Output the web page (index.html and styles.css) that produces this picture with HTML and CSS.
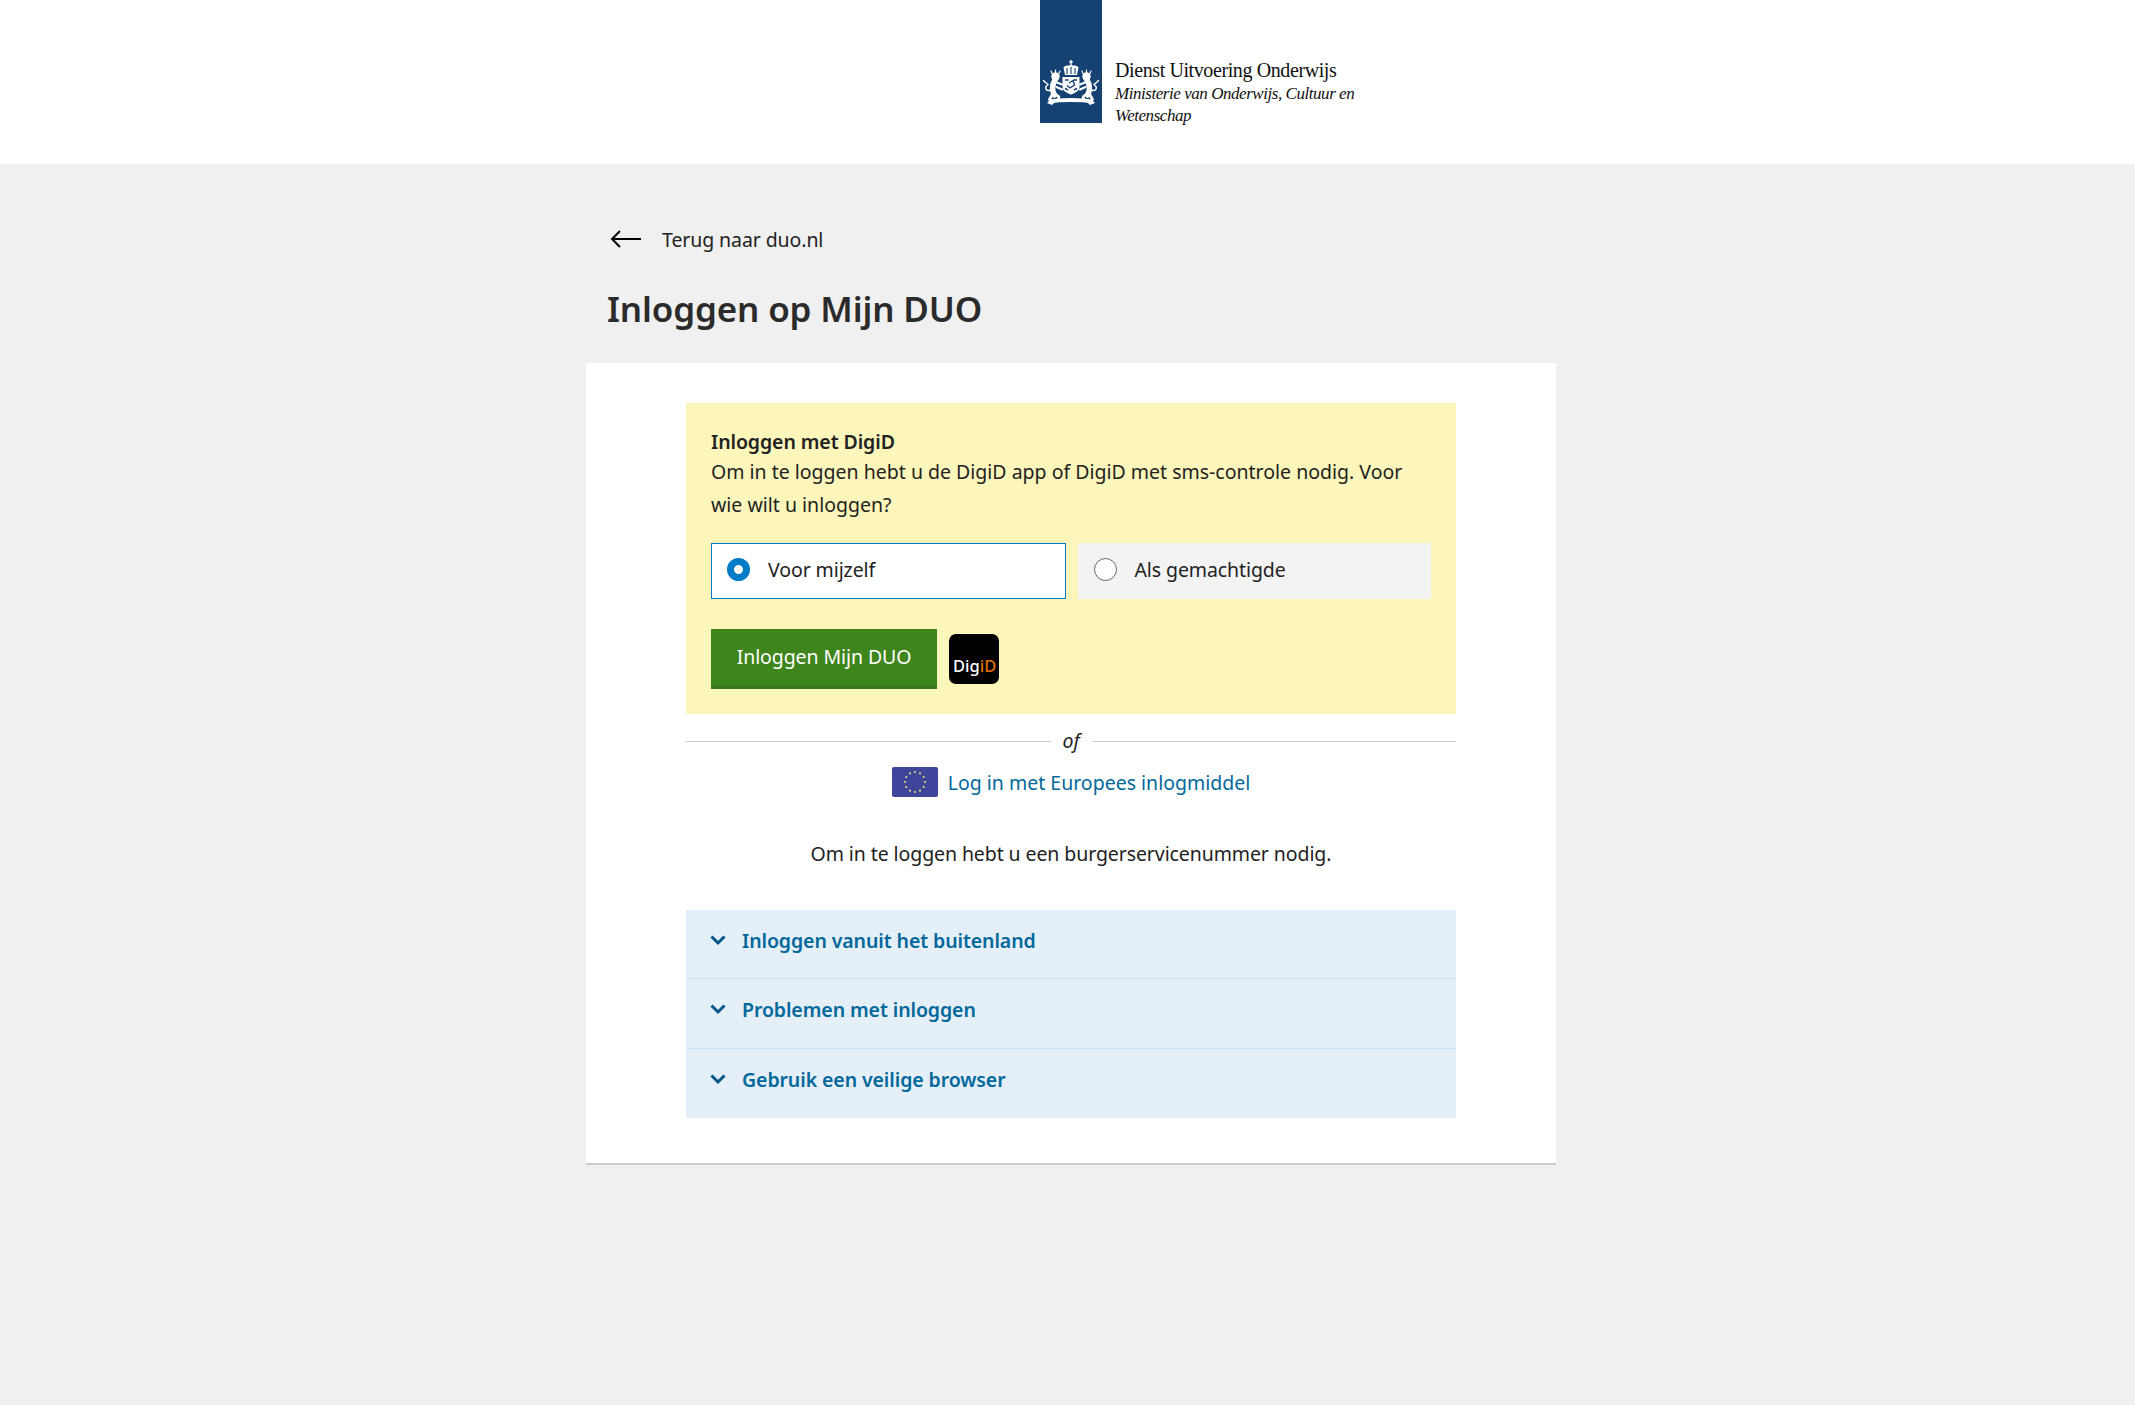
FILE: index.html
```html
<!DOCTYPE html>
<html lang="nl">
<head>
    <title>Inloggen op Mijn DUO</title>
    <meta charset="utf-8"/>
    <link rel="stylesheet" href="styles.css">
</head>
<body>
    <header class="site-header">
        <svg class="logo-bar" width="62" height="123" viewBox="0 0 62 123">
            <defs>
                <g id="lion" fill="none" stroke="#fff" stroke-linecap="round">
                    <circle cx="15.500" cy="76.500" r="4.200" fill="#fff" stroke="none"/>
                    <path d="M15.500 79C12.500 84 11.500 90 14.500 95" stroke-width="5.500"/>
                    <path d="M17 82.500L22 84.500M16.500 87L22 89.500" stroke-width="2"/>
                    <path d="M14 94C18 95 20.500 97 17.500 100.500M12.500 94L9.500 99.500" stroke-width="2.800"/>
                    <path d="M11 90C5.500 92 4 87 8 84.500C6.500 83 5 82.500 3.500 80.500" stroke-width="1.400"/>
                    <path d="M12 73.500L11 71M15.500 72.500V70M19 73.500L20 71" stroke-width="1.200"/>
                </g>
            </defs>
            <rect width="62" height="123" fill="#154273"/>
            <use href="#lion"/>
            <use href="#lion" transform="translate(62 0) scale(-1 1)"/>
            <g fill="#fff">
                <rect x="30.300" y="60" width="1.400" height="5"/>
                <rect x="29" y="61.300" width="4" height="1.200"/>
                <path d="M23.500 67.500C26 64.500 28.500 66 31 65C33.500 66 36 64.500 38.500 67.500L37 75H25z"/>
                <path d="M22.500 77H39.500V87C39.500 91 35 93 31 94.500C27 93 22.500 91 22.500 87z"/>
            </g>
            <path d="M27 68V74M31 67V74M35 68V74" stroke="#154273" stroke-width="1.100" fill="none"/>
            <path d="M25 80H28.500M33.500 80H37M29 83L33 80.500L34.500 85L30 88L27 85.500M25 88.500L28 90M37 88.500L34 90" stroke="#154273" stroke-width="1.400" fill="none"/>
            <path d="M11 101.500C17 100 25 100 31 100C37 100 45 100 51 101.500" stroke="#fff" stroke-width="4" fill="none"/>
            <path d="M11 99L7 103L12 105L15 102M51 99L55 103L50 105L47 102" fill="#fff"/>
        </svg>
        <div class="logo-text">
            <div class="logo-org">Dienst Uitvoering Onderwijs</div>
            <div class="logo-ministry">Ministerie van Onderwijs, Cultuur en<br>Wetenschap</div>
        </div>
    </header>

    <main class="page">
        <a class="back-link" href="#">
            <svg width="32" height="20" viewBox="0 0 32 20">
                <path d="M31 10H2M10 2l-8 8 8 8" fill="none" stroke="#000" stroke-width="2"/>
            </svg>
            <span>Terug naar duo.nl</span>
        </a>
        <h1 class="page-title">Inloggen op Mijn DUO</h1>

        <section class="card">
            <div class="digid-box">
                <div class="digid-title">Inloggen met DigiD</div>
                <p class="digid-intro">Om in te loggen hebt u de DigiD app of DigiD met sms-controle nodig. Voor wie wilt u inloggen?</p>
                <div class="choice-row">
                    <label class="choice choice-active"><span class="radio radio-on"></span>Voor mijzelf</label>
                    <label class="choice"><span class="radio"></span>Als gemachtigde</label>
                </div>
                <div class="submit-row">
                    <a class="btn-login" href="#">Inloggen Mijn DUO</a>
                    <span class="digid-mark">Dig<b>iD</b></span>
                </div>
            </div>

            <div class="divider"><span>of</span></div>

            <a class="eu-link" href="#">
                <svg width="46" height="30" viewBox="0 0 46 30">
                    <rect width="46" height="30" rx="2" fill="#3f459b"/>
                    <g fill="#e3d87a">
                        <circle cx="23" cy="5" r="1.100"/>
                        <circle cx="28" cy="6.300" r="1.100"/>
                        <circle cx="31.700" cy="10" r="1.100"/>
                        <circle cx="33" cy="15" r="1.100"/>
                        <circle cx="31.700" cy="20" r="1.100"/>
                        <circle cx="28" cy="23.700" r="1.100"/>
                        <circle cx="23" cy="25" r="1.100"/>
                        <circle cx="18" cy="23.700" r="1.100"/>
                        <circle cx="14.300" cy="20" r="1.100"/>
                        <circle cx="13" cy="15" r="1.100"/>
                        <circle cx="14.300" cy="10" r="1.100"/>
                        <circle cx="18" cy="6.300" r="1.100"/>
                    </g>
                </svg>
                <span>Log in met Europees inlogmiddel</span>
            </a>

            <p class="bsn-note">Om in te loggen hebt u een burgerservicenummer nodig.</p>

            <div class="accordion">
                <a class="acc-row" href="#">
                    <svg class="chevron" width="16" height="11" viewBox="0 0 16 11"><path d="M1.500 1.500L8 8l6.500-6.500" fill="none" stroke="#01578a" stroke-width="3"/></svg>
                    Inloggen vanuit het buitenland
                </a>
                <a class="acc-row" href="#">
                    <svg class="chevron" width="16" height="11" viewBox="0 0 16 11"><path d="M1.500 1.500L8 8l6.500-6.500" fill="none" stroke="#01578a" stroke-width="3"/></svg>
                    Problemen met inloggen
                </a>
                <a class="acc-row" href="#">
                    <svg class="chevron" width="16" height="11" viewBox="0 0 16 11"><path d="M1.500 1.500L8 8l6.500-6.500" fill="none" stroke="#01578a" stroke-width="3"/></svg>
                    Gebruik een veilige browser
                </a>
            </div>
        </section>
    </main>
</body>
</html>
```

FILE: styles.css
```css
html {
    height: 100%;
}

body {
    min-height: 100%;
    margin: 0;
    padding: 0;
    background: #f0f0f0;
    font-family: "Noto Sans", "Open Sans", sans-serif;
    font-size: 19.5px;
    letter-spacing: -0.09px;
    color: #222222;
}

a {
    text-decoration: none;
}

.site-header {
    display: flex;
    align-items: flex-start;
    height: 164px;
    padding-left: 1040px;
    background: #ffffff;
    box-sizing: border-box;
}

.logo-bar {
    display: block;
    flex: none;
}

.logo-text {
    margin: 59px 0 0 13px;
    font-family: "Liberation Serif", serif;
    color: #111111;
}

.logo-org {
    font-size: 20px;
    line-height: 23px;
    letter-spacing: -0.4px;
}

.logo-ministry {
    margin-top: 1px;
    font-size: 17px;
    line-height: 22px;
    font-style: italic;
    letter-spacing: -0.45px;
}

.page {
    width: 970px;
    margin-left: 586px;
}

.back-link {
    display: flex;
    align-items: center;
    gap: 20px;
    margin: 63px 0 0 24px;
    height: 24px;
    color: #222222;
}

.page-title {
    margin: 34px 0 30px 21px;
    font-size: 35px;
    line-height: 48px;
    font-weight: 600;
    letter-spacing: -0.15px;
    color: #2b2b2b;
}

.card {
    box-sizing: border-box;
    height: 802px;
    padding: 40px 100px 0;
    background: #ffffff;
    border-bottom: 2px solid #cccccc;
}

.digid-box {
    box-sizing: border-box;
    height: 311px;
    padding: 25px 25px 0;
    background: #fdf6bb;
}

.digid-title {
    font-weight: 600;
    line-height: 27px;
}

.digid-intro {
    margin: 0;
    line-height: 33px;
    letter-spacing: 0;
}

.choice-row {
    display: flex;
    gap: 12px;
    margin-top: 22px;
}

.choice {
    box-sizing: border-box;
    display: flex;
    align-items: center;
    flex: 1;
    height: 56px;
    padding: 0 0 4px 16px;
    background: #f3f3f3;
}

.choice-active {
    padding-left: 15px;
    background: #ffffff;
    border: 1px solid #007bc7;
}

.radio {
    box-sizing: border-box;
    width: 23px;
    height: 23px;
    margin-right: 18px;
    background: #ffffff;
    border: 1px solid #666666;
    border-radius: 50%;
}

.radio-on {
    border: 7px solid #007bc7;
}

.submit-row {
    display: flex;
    align-items: center;
    gap: 12px;
    margin-top: 30px;
}

.btn-login {
    box-sizing: border-box;
    width: 226px;
    height: 60px;
    line-height: 56px;
    text-align: center;
    color: #ffffff;
    background: #3e851c;
    border-bottom: 3px solid #39741e;
}

.digid-mark {
    box-sizing: border-box;
    width: 50px;
    height: 50px;
    padding: 22px 0 0 4px;
    font-size: 16.5px;
    line-height: 20px;
    font-weight: 500;
    letter-spacing: 0;
    color: #ffffff;
    background: #000000;
    border-radius: 7px;
}

.digid-mark b {
    font-weight: 500;
    color: #e17000;
}

.divider {
    display: flex;
    align-items: center;
    gap: 12px;
    height: 55px;
    font-style: italic;
}

.divider span {
    margin-top: -3px;
}

.divider::before,
.divider::after {
    content: "";
    flex: 1;
    border-top: 1px solid #cccccc;
}

.eu-link {
    display: flex;
    align-items: center;
    justify-content: center;
    gap: 10px;
    height: 30px;
    margin-top: -2px;
    letter-spacing: 0;
    color: #01689b;
}

.bsn-note {
    margin: 42px 0 0;
    line-height: 30px;
    text-align: center;
}

.accordion {
    margin-top: 41px;
    background: #e5eff8;
}

.acc-row {
    box-sizing: border-box;
    display: flex;
    align-items: center;
    gap: 16px;
    height: 69.33px;
    padding: 0 0 7px 24px;
    font-weight: 600;
    color: #01689b;
    border-bottom: 1px solid #cfe0f1;
}

.acc-row:last-child {
    border-bottom: 0;
}
```
